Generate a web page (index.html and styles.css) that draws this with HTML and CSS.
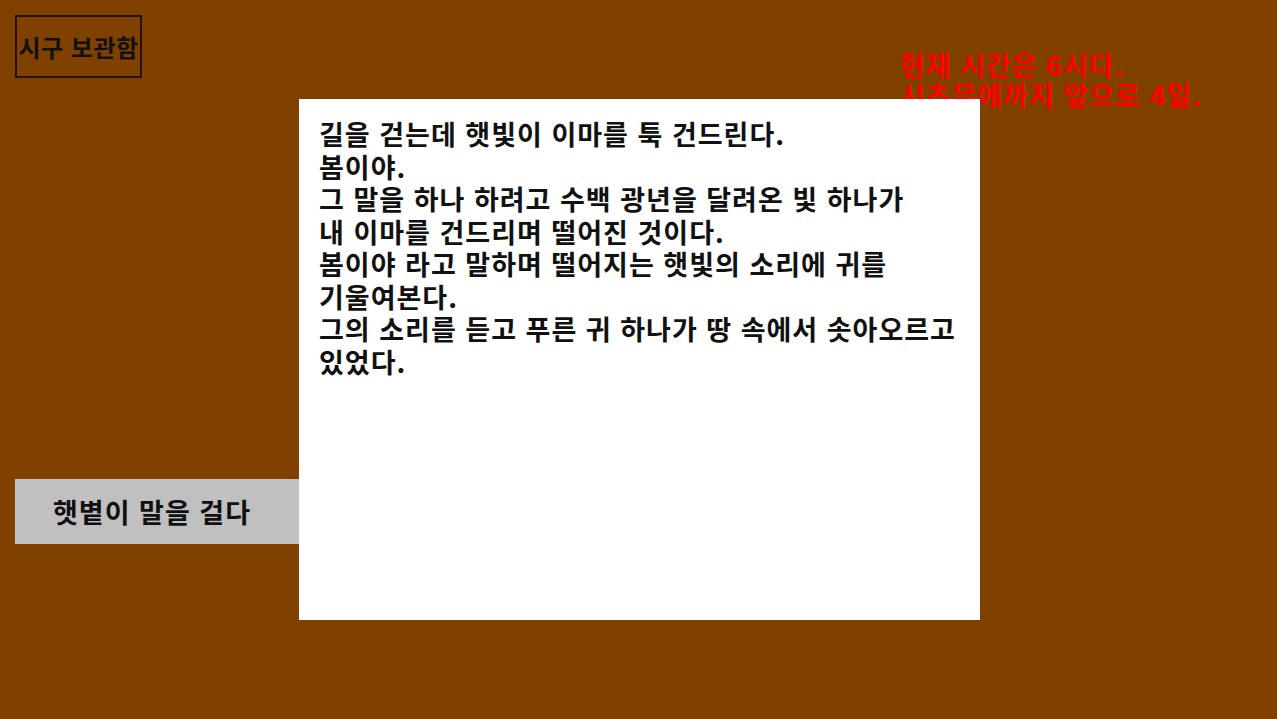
FILE: index.html
```html
<!DOCTYPE html>
<html lang="ko">
<head>
<meta charset="utf-8">
<link rel="stylesheet" href="styles.css">
</head>
<body>
<div class="page">
  <div class="side">
    <div class="label">시구 보관함</div>
    <div class="button">햇볕이 말을 걸다</div>
  </div>
  <div class="clock">현재 시간은 6시다.<br>시츠무에까지 앞으로 4일.</div>
  <div class="panel">
    <p class="poem">길을 걷는데 햇빛이 이마를 툭 건드린다.<br>봄이야.<br>그 말을 하나 하려고 수백 광년을 달려온 빛 하나가<br>내 이마를 건드리며 떨어진 것이다.<br>봄이야 라고 말하며 떨어지는 햇빛의 소리에 귀를 기울여본다.<br>그의 소리를 듣고 푸른 귀 하나가 땅 속에서 솟아오르고 있었다.</p>
  </div>
</div>
</body>
</html>
```
FILE: styles.css
```css
html, body {
  margin: 0;
  padding: 0;
  background: #804000;
}
body {
  font-family: "Noto Sans CJK KR", "Noto Sans", sans-serif;
  font-weight: 700;
  color: #000;
}
.page {
  position: relative;
  display: flex;
  align-items: flex-start;
  width: 1277px;
  height: 719px;
}
.side {
  display: flex;
  flex-direction: column;
  align-items: flex-start;
  padding: 15px 0 0 15px;
  width: 284px;
}
.label {
  box-sizing: border-box;
  width: 127px;
  height: 63px;
  border: 2px solid #2a1000;
  display: flex;
  align-items: center;
  justify-content: center;
  font-size: 24px;
  line-height: 1;
  color: #111;
  white-space: nowrap;
  letter-spacing: 0.5px;
}
.button {
  box-sizing: border-box;
  margin-top: 401px;
  width: 284px;
  height: 65px;
  background: #c0c0c0;
  display: flex;
  align-items: center;
  padding-left: 38px;
  font-size: 27px;
  letter-spacing: 1px;
  color: #111;
}
.clock {
  position: absolute;
  left: 900px;
  top: 50px;
  color: #f00;
  font-size: 27px;
  letter-spacing: 1px;
  line-height: 30px;
  white-space: nowrap;
}
.panel {
  position: relative;
  z-index: 1;
  box-sizing: border-box;
  margin-top: 99px;
  width: 681px;
  height: 521px;
  background: #fff;
  padding: 19px 8px 20px 20px;
}
.poem {
  margin: 0;
  font-size: 27px;
  letter-spacing: 1px;
  line-height: 32.5px;
  color: #111;
  word-break: keep-all;
}
```
